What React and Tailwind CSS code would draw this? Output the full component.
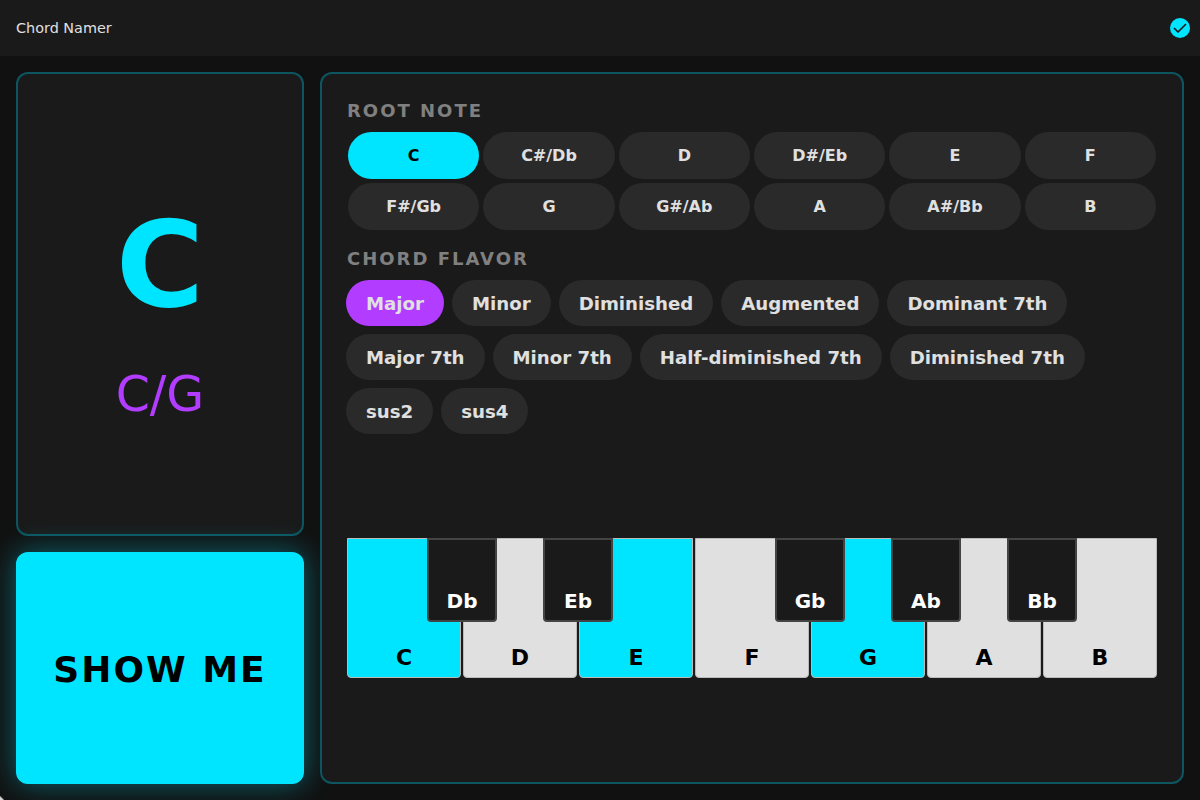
const sans = "font-['DejaVu_Sans',sans-serif]";
const roots = ["C", "C#/Db", "D", "D#/Eb", "E", "F", "F#/Gb", "G", "G#/Ab", "A", "A#/Bb", "B"];
const rows = [
  ["Major", "Minor", "Diminished", "Augmented", "Dominant 7th"],
  ["Major 7th", "Minor 7th", "Half-diminished 7th", "Diminished 7th"],
  ["sus2", "sus4"],
];
const whites = [["C", 1], ["D", 0], ["E", 1], ["F", 0], ["G", 1], ["A", 0], ["B", 0]];
const blacks = [["Db", 80], ["Eb", 196], ["Gb", 428], ["Ab", 544], ["Bb", 660]];

export default function App() {
  return (
    <div className={`${sans} relative w-[1200px] h-[800px] overflow-hidden flex flex-col bg-[#111111]`}>
      <header className="h-14 shrink-0 bg-[#1a1a1a] flex items-center justify-between pl-4 pr-2.5">
        <span className="text-[14.4px] pt-0.5 text-[#e0e0e0]">Chord Namer</span>
        <span className="w-5 h-5 rounded-full bg-[#00e5ff] flex items-center justify-center">
          <svg width="20" height="20" viewBox="0 0 20 20" fill="none" stroke="#1a1a1a" strokeWidth="1.7" strokeLinecap="round" strokeLinejoin="round">
            <path d="M4.5 10.5 L8 14 L15.5 6.5" />
          </svg>
        </span>
      </header>
      <main className="flex-1 flex gap-4 p-4 min-h-0">
        <div className="w-72 shrink-0 flex flex-col gap-4">
          <section className="flex-1 rounded-xl border-2 border-[#0d5560] bg-[#1a1a1a] flex flex-col items-center justify-center pt-[10px]">
            <div className="text-[120px] leading-[140px] font-bold text-[#00e5ff]">C</div>
            <div className="text-[49px] leading-[56px] mt-8 text-[#b23cff]">C/G</div>
          </section>
          <button className="h-[232px] shrink-0 rounded-xl bg-[#00e5ff] text-black text-4xl font-bold tracking-[2px] pt-1 shadow-[0_0_30px_rgba(0,229,255,0.4)]">SHOW ME</button>
        </div>
        <section className="flex-1 rounded-xl border-2 border-[#0d5560] bg-[#1a1a1a] px-6 pt-[23px]">
          <h2 className="text-lg leading-[27px] font-bold tracking-[2px] ml-px text-[#808080]">ROOT NOTE</h2>
          <div className="grid grid-cols-6 gap-1 mt-2 ml-0.5 w-[808px]">
            {roots.map((r, i) => (
              <button key={r} className={`h-[47px] rounded-3xl text-base font-bold ${i === 0 ? "bg-[#00e5ff] text-black" : "bg-[#2a2a2a] text-[#e0e0e0]"}`}>{r}</button>
            ))}
          </div>
          <h2 className="text-lg leading-[27px] font-bold tracking-[2px] ml-px text-[#808080] mt-[15px]">CHORD FLAVOR</h2>
          <div className="mt-2 flex flex-col gap-2">
            {rows.map((row, ri) => (
              <div key={ri} className="flex gap-2">
                {row.map((f) => (
                  <button key={f} className={`h-[46px] px-5 pt-px rounded-3xl text-[18.17px] font-bold ${f === "Major" ? "bg-[#b23cff] text-[#e0e0e0]" : "bg-[#2a2a2a] text-[#e0e0e0]"}`}>{f}</button>
                ))}
              </div>
            ))}
          </div>
          <div className="relative w-[810px] h-[140px] mt-[104px] ml-px flex gap-0.5">
            {whites.map(([n, on]) => (
              <div key={n} className={`flex-1 h-full rounded-b border border-[#bbbbbb] flex items-end justify-center pb-[3px] text-[22px] font-bold text-black ${on ? "bg-[#00e5ff]" : "bg-[#e0e0e0]"}`}>{n}</div>
            ))}
            {blacks.map(([n, x]) => (
              <div key={n} style={{ left: x }} className="absolute top-0 w-[70px] h-[84px] rounded-b border-2 border-[#444444] bg-[#1a1a1a] text-white flex items-end justify-center pb-[5px] text-xl font-bold">{n}</div>
            ))}
          </div>
        </section>
      </main>
      <div className="absolute bottom-0 left-0 w-1 h-1 bg-[linear-gradient(45deg,#d8d8d8_35%,transparent_65%)]" />
    </div>
  );
}
